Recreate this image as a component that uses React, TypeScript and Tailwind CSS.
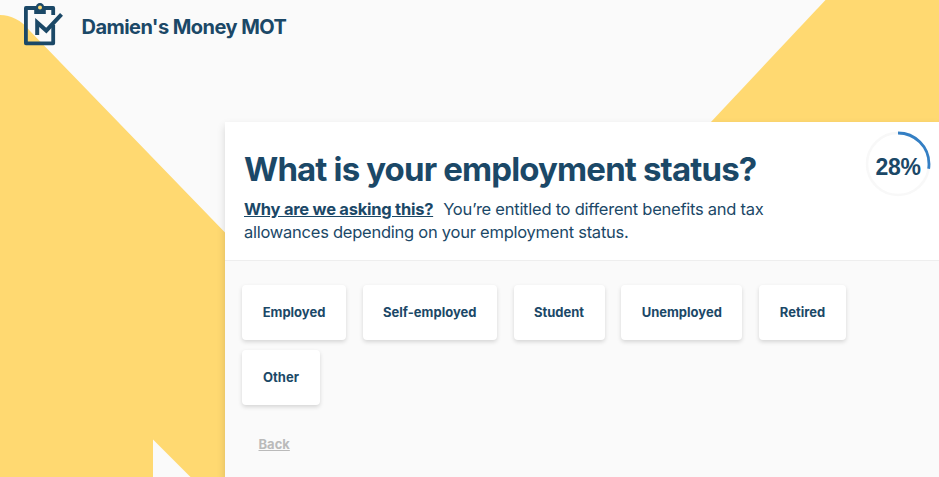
const options = [
  { label: "Employed", width: "w-[104px]" },
  { label: "Self-employed", width: "w-[134px]" },
  { label: "Student", width: "w-[91px]" },
  { label: "Unemployed", width: "w-[121px]" },
  { label: "Retired", width: "w-[87px]" },
  { label: "Other", width: "w-[78px]" },
];

function Background() {
  return (
    <svg
      className="absolute inset-0 w-full h-full"
      viewBox="0 0 939 477"
      fill="#ffd971"
    >
      <path d="M0 15 C11 15 21 20 30 31 L225 232.500 V477 H190.500 L153 439.500 V477 H0 Z" />
      <path d="M825.500 0 H939 V140 H694 Z" />
    </svg>
  );
}

function Logo() {
  return (
    <svg width="40" height="44" viewBox="0 0 40 44" fill="none">
      <path
        d="M29.200 12 V5 H1.900 V40.300 H29.200 V22"
        stroke="#1b4867"
        strokeWidth="3.800"
        strokeLinejoin="round"
      />
      <path d="M10.200 4 H21.800 V11 H10.200 Z" fill="#1b4867" />
      <circle cx="16" cy="4.500" r="4.400" fill="#1b4867" />
      <circle cx="16" cy="4.400" r="2" fill="#ffd971" />
      <path
        d="M13.200 32 V19.500 L22.300 27.600 L37.500 11.300"
        stroke="#1b4867"
        strokeWidth="4"
      />
    </svg>
  );
}

function Progress() {
  return (
    <div className="relative w-[66px] h-[66px] flex items-center justify-center">
      <svg className="absolute inset-0" viewBox="0 0 66 66" fill="none">
        <circle cx="33" cy="33" r="31" stroke="#f8f8f8" strokeWidth="2.500" />
        <circle
          cx="33"
          cy="33"
          r="31"
          stroke="#347fc4"
          strokeWidth="2.800"
          pathLength="100"
          strokeDasharray="27.500 100"
          transform="rotate(-90 33 33)"
        />
      </svg>
      <span className="relative pt-[6px] text-[23px] font-bold tracking-[-0.3px] font-['Liberation_Sans',sans-serif]">
        28%
      </span>
    </div>
  );
}

export default function App() {
  return (
    <div className="relative w-[939px] h-[477px] overflow-hidden bg-[#fafafa] text-[#1b4867] font-['Inter','Liberation_Sans',sans-serif]">
      <Background />
      <div className="relative flex flex-col h-full">
        {/* Header */}
        <header className="flex items-center gap-[17.5px] h-[54px] pl-6 pb-1">
          <Logo />
          <span className="pt-1 text-[20px] font-bold tracking-[-0.55px] whitespace-nowrap">
            Damien's Money MOT
          </span>
        </header>

        {/* Question card */}
        <main className="flex flex-col flex-1 mt-[68px] ml-[225px] bg-[#fafafa] shadow-[0_4px_8px_rgba(0,0,0,0.15)]">
          <div className="flex justify-between h-[139px] pl-[19px] pr-2 pt-[9px] bg-white border-b border-[#eeeeee]">
            <div className="pt-[18px]">
              <h1 className="text-[33px] leading-10 font-bold tracking-[-0.86px] whitespace-nowrap">
                What is your employment status?
              </h1>
              <p className="mt-[9px] text-[16.5px] leading-[23px] tracking-[-0.25px] whitespace-nowrap">
                <a className="font-bold underline mr-[10px]">Why are we asking this?</a>
                <span>You’re entitled to different benefits and tax</span>
                <br />
                <span>allowances depending on your employment status.</span>
              </p>
            </div>
            <Progress />
          </div>

          <div className="flex flex-wrap gap-x-[16.75px] gap-y-[10px] pl-[17px] pr-10 pt-6">
            {options.map((option) => (
              <button
                key={option.label}
                className={`${option.width} h-[55px] rounded bg-white text-[13px] font-bold shadow-[0_2px_4px_rgba(0,0,0,0.15)]`}
              >
                {option.label}
              </button>
            ))}
          </div>
          <a className="mt-[29px] ml-[33.5px] w-fit text-[13px] leading-5 font-bold underline text-[#bababa]">
            Back
          </a>
        </main>
      </div>
    </div>
  );
}
